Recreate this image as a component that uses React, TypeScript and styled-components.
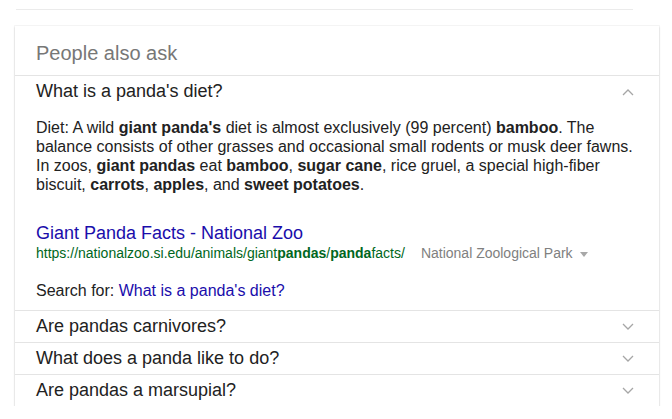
import React from "react";
import styled, { createGlobalStyle } from "styled-components";

const GlobalStyle = createGlobalStyle`
  body {
    margin: 0;
    background: #fff;
    font-family: "Liberation Sans", Arial, sans-serif;
  }
`;

const Page = styled.div`
  padding: 9px 0 0 15px;
`;

const TopRule = styled.div`
  width: 617px;
  margin-left: 1px;
  border-top: 1px solid #ebebeb;
`;

const Card = styled.div`
  margin-top: 16px;
  width: 644px;
  background: #fff;
  box-shadow: 0 1px 2px rgba(0, 0, 0, 0.18), 0 0 0 1px rgba(0, 0, 0, 0.03);
`;

const Header = styled.div`
  height: 44px;
  padding: 5px 21px 0;
  display: flex;
  align-items: center;
  font-size: 20px;
  color: #777;
`;

const Question = styled.div`
  height: 31px;
  border-top: 1px solid #e4e4e4;
  display: flex;
  align-items: center;
  justify-content: space-between;
  padding: 0 25px 0 21px;
  font-size: 18px;
  color: #222;
`;

const Answer = styled.div`
  padding: 11px 21px 10px;
  font-size: 16px;
  color: #222;
`;

const Snippet = styled.p`
  margin: 0;
  line-height: 19px;
  white-space: nowrap;
  b {
    font-weight: bold;
  }
`;

const Source = styled.div`
  margin-top: 29px;
`;

const Title = styled.a`
  display: block;
  font-size: 18px;
  line-height: 21px;
  color: #1a0dab;
  text-decoration: none;
`;

const UrlRow = styled.div`
  display: flex;
  align-items: center;
  line-height: 18px;
  font-size: 14px;
`;

const Url = styled.cite`
  font-style: normal;
  color: #006621;
  b {
    font-weight: bold;
  }
`;

const Site = styled.span`
  margin-left: 16px;
  color: #808080;
  display: flex;
  align-items: center;
`;

const Caret = styled.span`
  margin-left: 7px;
  margin-top: 2px;
  width: 0;
  height: 0;
  border-left: 4px solid transparent;
  border-right: 4px solid transparent;
  border-top: 5px solid #a8a8a8;
`;

const SearchFor = styled.div`
  margin-top: 19px;
  line-height: 19px;
  a {
    color: #1a0dab;
    text-decoration: none;
  }
`;

const Chevron = ({ up }: { up?: boolean }) => (
  <svg width="12" height="8" viewBox="0 0 12 8" fill="none">
    <path
      d={up ? "M1 7 L6 2 L11 7" : "M1 1 L6 6 L11 1"}
      stroke="#a6a6a6"
      strokeWidth="1.3"
    />
  </svg>
);

const others = [
  "Are pandas carnivores?",
  "What does a panda like to do?",
  "Are pandas a marsupial?",
];

const App = () => (
  <Page>
    <GlobalStyle />
    <TopRule />
    <Card>
      <Header>People also ask</Header>
      <Question>
        What is a panda's diet?
        <Chevron up />
      </Question>
      <Answer>
        <Snippet>
          Diet: A wild <b>giant panda's</b> diet is almost exclusively (99
          percent) <b>bamboo</b>. The
          <br />
          balance consists of other grasses and occasional small rodents or
          musk deer fawns.
          <br />
          In zoos, <b>giant pandas</b> eat <b>bamboo</b>, <b>sugar cane</b>,
          rice gruel, a special high-fiber
          <br />
          biscuit, <b>carrots</b>, <b>apples</b>, and <b>sweet potatoes</b>.
        </Snippet>
        <Source>
          <Title href="#">Giant Panda Facts - National Zoo</Title>
          <UrlRow>
            <Url>
              https://nationalzoo.si.edu/animals/giant<b>pandas</b>/
              <b>panda</b>facts/
            </Url>
            <Site>
              National Zoological Park
              <Caret />
            </Site>
          </UrlRow>
        </Source>
        <SearchFor>
          Search for: <a href="#">What is a panda's diet?</a>
        </SearchFor>
      </Answer>
      {others.map((q) => (
        <Question key={q}>
          {q}
          <Chevron />
        </Question>
      ))}
    </Card>
  </Page>
);

export default App;
